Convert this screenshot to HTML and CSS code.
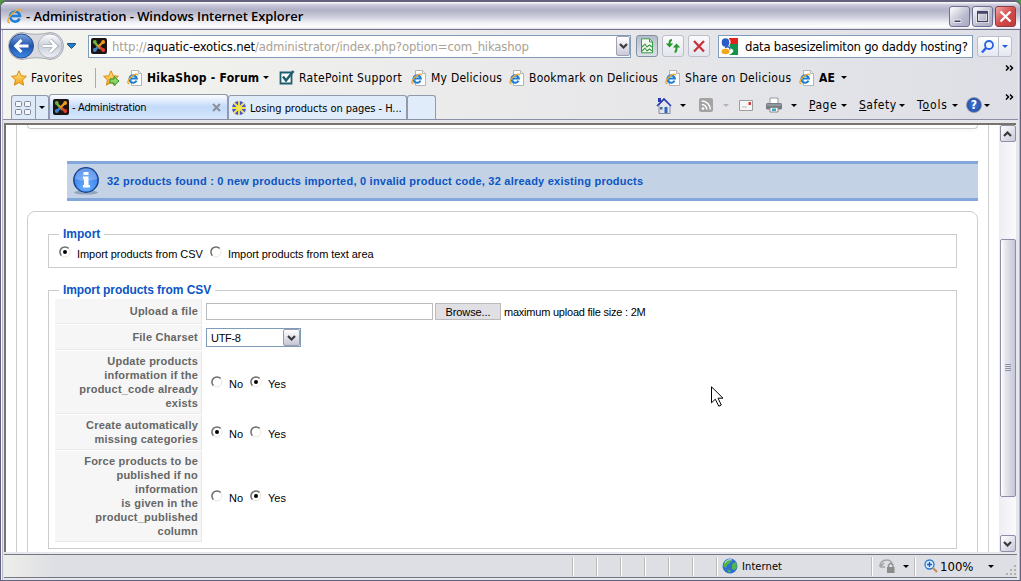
FILE: index.html
```html
<!DOCTYPE html>
<html lang="en">
<head>
    <meta charset="UTF-8">
    <title>- Administration</title>
    <link rel="stylesheet" href="styles.css">
</head>
<body>
    <!-- shared icons -->
    <svg class="defs" width="0" height="0">
        <linearGradient id="gold" x1="0" y1="0" x2="0" y2="1"><stop offset="0" stop-color="#ffe88a"/><stop offset="1" stop-color="#f5a012"/></linearGradient>
        <linearGradient id="blue" x1="0" y1="0" x2="0" y2="1"><stop offset="0" stop-color="#7da3dc"/><stop offset=".5" stop-color="#2055ac"/><stop offset="1" stop-color="#3c8ae6"/></linearGradient>
        <linearGradient id="grey" x1="0" y1="0" x2="0" y2="1"><stop offset="0" stop-color="#fff"/><stop offset=".5" stop-color="#c9cfda"/><stop offset="1" stop-color="#eef1f6"/></linearGradient>
        <radialGradient id="info" cx=".5" cy=".8" r=".8"><stop offset="0" stop-color="#6bb1ff"/><stop offset="1" stop-color="#2b72e4"/></radialGradient>
        <symbol id="ie" viewBox="0 0 16 16">
            <path d="M12.6 10.6A5 5 0 1 1 13 8H4" fill="none" stroke="#1d7fd6" stroke-width="2.6"/>
            <path d="M3 14.6C-.5 15 .6 10 5.500 5.300S15 .2 14.600 4" fill="none" stroke="#f0a92a" stroke-width="1.500"/>
        </symbol>
        <symbol id="page" viewBox="0 0 16 16">
            <path d="M4.500.5h7l3 3v12h-10z" fill="#fff" stroke="#b5b5b5"/>
            <path d="M11.500.5v3h3" fill="#eee" stroke="#b5b5b5"/>
            <path d="M9.500 10.600A3.700 3.700 0 1 1 9.800 8.500H3" fill="none" stroke="#1d7fd6" stroke-width="2.100"/>
            <path d="M2.500 13.500C-.5 14 .8 10 4 7s7-4 6.800-1.500" fill="none" stroke="#f0a92a" stroke-width="1.300"/>
        </symbol>
        <symbol id="joomla" viewBox="0 0 16 16">
            <rect width="16" height="16" rx="2" fill="#1c1414"/>
            <path d="M4 5l4 4 2 2" stroke="#7ab83a" stroke-width="2.400"/>
            <path d="M12 4L8 8l-2 2" stroke="#f2941f" stroke-width="2.400"/>
            <path d="M12 12L9 9" stroke="#e0402a" stroke-width="2.400"/>
            <path d="M4 12l3-3" stroke="#3b7fc9" stroke-width="2.400"/>
            <circle cx="3.800" cy="4" r="1.900" fill="#6db33a"/><circle cx="12.200" cy="4" r="1.900" fill="#f09a20"/>
            <circle cx="12.200" cy="12" r="1.900" fill="#e23b28"/><circle cx="3.800" cy="12" r="1.900" fill="#3f86d0"/>
        </symbol>
        <symbol id="star" viewBox="0 0 16 16"><path d="M8 .8l2.200 4.900 5.200.6-3.900 3.600 1.100 5.300L8 12.500l-4.600 2.700 1.100-5.300L.6 6.300l5.200-.6z" fill="url(#gold)" stroke="#d98a12"/></symbol>
        <symbol id="down" viewBox="0 0 6 3"><path d="M0 0h6L3 3z"/></symbol>
        <symbol id="chev" viewBox="0 0 9 6"><path d="M1 1l3.500 3.500L8 1" fill="none" stroke="#3a3a42" stroke-width="2.200"/></symbol>
        <symbol id="more" viewBox="0 0 9 6"><path d="M1 .5L3.500 3 1 5.500M5 .5L7.500 3 5 5.500" fill="none" stroke="#000" stroke-width="1.500"/></symbol>
        <symbol id="radio" viewBox="0 0 12 12">
            <circle cx="6" cy="6" r="5" fill="#fff" stroke="#e9e7dc"/>
            <path d="M2.400 9.600A5 5 0 0 1 9.600 2.400" fill="none" stroke="#6f6f6f" stroke-width="1.500"/>
        </symbol>
    </svg>

    <div class="window">
        <div class="title-bar">
            <svg class="title-icon" width="16" height="16"><use href="#ie"/></svg>
            <span class="title-text">- Administration - Windows Internet Explorer</span>
            <div class="win-btn"><svg width="19" height="19"><path d="M4 13h7v2.500H4z" fill="#44446a" stroke="#fff" stroke-width=".8"/></svg></div>
            <div class="win-btn"><svg width="19" height="19"><path d="M4.500 4.500h10v10h-10z" fill="none" stroke="#fff" stroke-width="3"/><path d="M4.500 4.500h10v10h-10zM4 6h11" fill="none" stroke="#44446a" stroke-width="1.300"/></svg></div>
            <div class="win-btn close"><svg width="19" height="19"><path d="M4.500 4.500l10 10M14.500 4.500l-10 10" stroke="#fff" stroke-width="2.400"/></svg></div>
        </div>

        <div class="address-row">
            <svg class="nav-buttons" width="58" height="30">
                <path d="M15 1.500Q29 5 43 1.500A13.500 13.500 0 0 1 43 28.500Q29 25 15 28.500A13.500 13.500 0 0 1 15 1.500z" fill="#d8dae0" stroke="#a9abb5"/>
                <circle cx="14.500" cy="15" r="12" fill="url(#blue)" stroke="#2a4d91"/>
                <path d="M21.500 15H9M14.500 9l-6 6 6 6" fill="none" stroke="#fff" stroke-width="2.800"/>
                <circle cx="43" cy="15" r="12" fill="url(#grey)" stroke="#b2b5c0"/>
                <path d="M36 15h12.500M43 9l6 6-6 6" fill="none" stroke="#9ca2b0" stroke-width="4"/>
                <path d="M36 15h12.500M43 9l6 6-6 6" fill="none" stroke="#fff" stroke-width="2.600"/>
            </svg>
            <svg class="history" width="9" height="6"><path d="M.5.5h8v1L4.500 5.500.5 1.500z" fill="#2a80c4" stroke="#1b4f86"/></svg>
            <div class="address-box">
                <svg width="16" height="16"><use href="#joomla"/></svg>
                <span class="url">http://<b>aquatic-exotics.net</b>/administrator/index.php?option=com_hikashop</span>
                <div class="drop-btn"><svg width="9" height="6"><use href="#chev"/></svg></div>
            </div>
            <div class="tool-btn pressed">
                <svg width="16" height="16"><path d="M2.500.8h8l3 3v11h-11z" fill="#f4fbf2" stroke="#3b9a45"/><path d="M10.500 1v3h3" fill="none" stroke="#3b9a45"/><path d="M3 9l3-3 2 3 2.500-2L13 9M3 13l3-3 2 3 2.500-2 2.500 2" fill="none" stroke="#3b9a45" stroke-width="1.100"/></svg>
            </div>
            <div class="tool-btn">
                <svg width="16" height="16"><path d="M7 2C4.500 2 4.500 4 4.500 7.500M9.500 14c2 0 2-2 2-5.500" fill="none" stroke="#259a2c" stroke-width="2"/><path d="M.8 5.500h7.400L4.500 9.500zM7.800 9.500h7.400L11.500 5.500z" fill="#259a2c"/></svg>
            </div>
            <div class="tool-btn">
                <svg width="16" height="16"><path d="M3 3l10 10.500M13 3L3 13.500" stroke="#c8323a" stroke-width="2.300"/></svg>
            </div>
            <div class="search-box">
                <svg width="17" height="17"><path d="M8 0h9v8H8z" fill="#e2231a"/><path d="M9 6h8v11H8z" fill="#129446"/><path d="M0 0h8v17H0z" fill="#fff"/><path d="M7 0q4 3 2 6t2 5-3 6H6V0z" fill="#fff"/><ellipse cx="4.500" cy="4.500" rx="3.800" ry="4.200" fill="#2a5cc8"/><path d="M4 9.500q5-2 5 2" fill="none" stroke="#2a5cc8" stroke-width="1.500"/><ellipse cx="4.500" cy="13.500" rx="4" ry="2.800" fill="#f1a81c"/></svg>
                <span class="search-text">data basesizelimiton go daddy hosting?</span>
            </div>
            <div class="search-btn">
                <svg width="20" height="21"><circle cx="11" cy="8" r="4" fill="#eef4ff" stroke="#2a63e0" stroke-width="1.800"/><path d="M8 11l-4 4.500" stroke="#2a63e0" stroke-width="2.500"/></svg>
                <div class="search-more"><svg class="blue-arrow" width="6" height="3"><use href="#down"/></svg></div>
            </div>
        </div>

        <div class="fav-row">
            <svg class="fav-star" width="16" height="16"><use href="#star"/></svg>
            <span class="fav favorites">Favorites</span>
            <div class="fav-line"></div>
            <svg class="fav-add" width="17" height="16"><use href="#star" width="16" height="16"/><path d="M7 9h4V6.500l5 4.500-5 4.500V13H7z" fill="#8fd765" stroke="#2f8f2a"/></svg>
            <svg class="fav-icon" width="16" height="16"><use href="#page"/></svg>
            <span class="fav forum">HikaShop - Forum</span>
            <svg class="arrow forum-arrow" width="6" height="3"><use href="#down"/></svg>
            <svg class="fav-icon" width="16" height="16"><path d="M1.500 2.500h11v11h-11z" fill="#fff" stroke="#1d5f70" stroke-width="1.800"/><path d="M4 6.500l3 4L14.500 1" fill="none" stroke="#1d5f70" stroke-width="2.500"/></svg>
            <span class="fav ratepoint">RatePoint Support</span>
            <svg class="fav-icon" width="16" height="16"><use href="#page"/></svg>
            <span class="fav my-del">My Delicious</span>
            <svg class="fav-icon" width="16" height="16"><use href="#page"/></svg>
            <span class="fav bookmark">Bookmark on Delicious</span>
            <svg class="fav-icon" width="16" height="16"><use href="#page"/></svg>
            <span class="fav share">Share on Delicious</span>
            <svg class="fav-icon" width="16" height="16"><use href="#page"/></svg>
            <span class="fav ae">AE</span>
            <svg class="arrow" width="6" height="3"><use href="#down"/></svg>
            <svg class="more" width="9" height="6"><use href="#more"/></svg>
        </div>

        <div class="tab-row">
            <div class="quick-tabs">
                <svg width="23" height="23"><g fill="#f3f6fb" stroke="#7d8799"><rect x="3.500" y="5.500" width="6" height="5" rx="1"/><rect x="12.500" y="5.500" width="6" height="5" rx="1"/><rect x="3.500" y="13.500" width="6" height="5" rx="1"/><rect x="12.500" y="13.500" width="6" height="5" rx="1"/></g></svg>
                <div class="quick-more"><svg width="6" height="3"><use href="#down"/></svg></div>
            </div>
            <div class="tab active">
                <svg width="16" height="16"><use href="#joomla"/></svg>
                <span class="tab-text admin">- Administration</span>
                <svg class="tab-close" width="9" height="9"><path d="M1 1l7 7M8 1L1 8" stroke="#8b8f98" stroke-width="2"/></svg>
            </div>
            <div class="tab">
                <svg width="16" height="16"><circle cx="8" cy="8" r="7" fill="#4b52d8"/><path d="M8 1v14M1 8h14M3 3l10 10M13 3L3 13" stroke="#f3e64b" stroke-width="1.800"/><circle cx="8" cy="8" r="2.500" fill="#f3e64b"/></svg>
                <span class="tab-text losing">Losing products on pages - H...</span>
            </div>
            <div class="tab new"></div>
            <div class="commands">
                <svg class="cmd-home" width="16" height="17"><path d="M3 8v8.500h11V8L8 3z" fill="#e3e5ec" stroke="#8a8fa0"/><path d="M1 9l7-7 7 7" fill="none" stroke="#2b3bb5" stroke-width="1.600"/><path d="M2 1h3v4H2z" fill="#2b3bb5"/><path d="M8.500 10h3v6h-3z" fill="#2d68c0"/><path d="M4 10h2.500v2.500H4z" fill="#53658a"/></svg>
                <svg class="cmd-a1" width="6" height="3"><use href="#down"/></svg>
                <svg class="cmd-rss" width="14" height="14"><rect width="14" height="14" rx="2" fill="#a3a3a3"/><circle cx="4" cy="10.500" r="1.300" fill="#fff"/><path d="M2.800 6.500a5 5 0 0 1 5 5M2.800 3a8.500 8.500 0 0 1 8.500 8.500" fill="none" stroke="#fff" stroke-width="1.500"/></svg>
                <svg class="cmd-a2" width="6" height="3"><use href="#down"/></svg>
                <svg class="cmd-mail" width="14" height="11"><path d="M.5.5h13v10H.5z" fill="#f5f5f5" stroke="#9d9d9d"/><path d="M9.500 2h2.500v3H9.500z" fill="#d8383a"/><path d="M3 7h5" stroke="#bbb"/></svg>
                <svg class="cmd-print" width="16" height="16"><path d="M4 1h8v6H4z" fill="#fff" stroke="#999"/><rect y="6" width="16" height="6.500" rx="1.500" fill="#777b83"/><path d="M1 8h14" stroke="#aeb2b9"/><path d="M4 10.500h8V15H4z" fill="#fff" stroke="#888"/><path d="M6 11.500h4V14H6z" fill="#37a6c8"/></svg>
                <svg class="cmd-a3" width="6" height="3"><use href="#down"/></svg>
                <span class="cmd page-cmd"><u>P</u>age</span><svg class="cmd-a4" width="6" height="3"><use href="#down"/></svg>
                <span class="cmd safety"><u>S</u>afety</span><svg class="cmd-a4" width="6" height="3"><use href="#down"/></svg>
                <span class="cmd tools">T<u>o</u>ols</span><svg class="cmd-a4" width="6" height="3"><use href="#down"/></svg>
                <div class="help">?</div>
                <svg class="cmd-a5" width="6" height="3"><use href="#down"/></svg>
            </div>
            <svg class="more" width="9" height="6"><use href="#more"/></svg>
        </div>

        <div class="viewport">
            <div class="page">
                <div class="top-panel"></div>
                <div class="message">
                    <svg width="28" height="30"><ellipse cx="14" cy="26.500" rx="12" ry="2" fill="#93a4bd"/><circle cx="14" cy="14" r="12.200" fill="url(#info)" stroke="#15408c" stroke-width="1.400"/><path d="M3 13a11 11 0 0 1 22 0Q14 17 3 13z" fill="#fff" opacity=".25"/><path d="M11.500 6h5v3h-5zM11 10.500h5.500V19h1.500v2.500h-7V19h1v-6h-1z" fill="#fff"/></svg>
                    <span>32 products found : 0 new products imported, 0 invalid product code, 32 already existing products</span>
                </div>
                <div class="panel">
                    <fieldset class="import-box">
                        <legend>Import</legend>
                        <div class="source">
                            <svg class="radio" width="12" height="12"><use href="#radio"/><circle cx="6" cy="6" r="2"/></svg>
                            <span class="from-csv">Import products from CSV</span>
                            <svg class="radio" width="12" height="12"><use href="#radio"/></svg>
                            <span class="from-text">Import products from text area</span>
                        </div>
                    </fieldset>
                    <fieldset class="csv-box">
                        <legend class="csv-legend">Import products from CSV</legend>
                        <div class="row r-file">
                            <div class="key">Upload a file</div>
                            <div class="value">
                                <div class="file-input"></div>
                                <div class="browse">Browse...</div>
                                <span class="max-size">maximum upload file size : 2M</span>
                            </div>
                        </div>
                        <div class="row r-charset">
                            <div class="key">File Charset</div>
                            <div class="value">
                                <div class="select"><span>UTF-8</span><div class="select-btn"><svg width="9" height="6"><use href="#chev"/></svg></div></div>
                            </div>
                        </div>
                        <div class="row r-update">
                            <div class="key">Update products<br>information if the<br>product_code already<br>exists</div>
                            <div class="value choice">
                                <svg class="radio" width="12" height="12"><use href="#radio"/></svg><span class="no">No</span>
                                <svg class="radio" width="12" height="12"><use href="#radio"/><circle cx="6" cy="6" r="2"/></svg><span>Yes</span>
                            </div>
                        </div>
                        <div class="row r-create">
                            <div class="key">Create automatically<br>missing categories</div>
                            <div class="value choice">
                                <svg class="radio" width="12" height="12"><use href="#radio"/><circle cx="6" cy="6" r="2"/></svg><span class="no">No</span>
                                <svg class="radio" width="12" height="12"><use href="#radio"/></svg><span>Yes</span>
                            </div>
                        </div>
                        <div class="row r-force">
                            <div class="key">Force products to be<br>published if no<br>information<br>is given in the<br>product_published<br>column</div>
                            <div class="value choice">
                                <svg class="radio" width="12" height="12"><use href="#radio"/></svg><span class="no">No</span>
                                <svg class="radio" width="12" height="12"><use href="#radio"/><circle cx="6" cy="6" r="2"/></svg><span>Yes</span>
                            </div>
                        </div>
                    </fieldset>
                </div>
            </div>
            <div class="scrollbar">
                <div class="scroll-btn"><svg class="flip" width="9" height="6"><use href="#chev"/></svg></div>
                <div class="thumb"><i></i><i></i><i></i><i></i></div>
                <div class="scroll-btn"><svg width="9" height="6"><use href="#chev"/></svg></div>
            </div>
        </div>

        <div class="status-bar">
            <div class="cell first"></div>
            <div class="cell"></div>
            <div class="cell"></div>
            <div class="cell"></div>
            <div class="cell"></div>
            <div class="cell"></div>
            <div class="cell"></div>
            <div class="cell zone">
                <svg width="16" height="16"><circle cx="8" cy="8" r="7.500" fill="#2f6fd0"/><path d="M3 3q4-3 6-1l-1 3-3 2-1 3-3-2zM10 6l4-2q2 5-1 8l-3-1zM5 11l4 2-2 2z" fill="#4fb848"/><path d="M3 5a6 6 0 0 1 7-3" stroke="#cfe3ff" fill="none"/></svg>
                <span>Internet</span>
            </div>
            <div class="cell lock">
                <svg width="17" height="16"><path d="M1 9q0-7 7-7 4 0 5 4M1 9l4-4M1 9h5" fill="none" stroke="#a5a5a5" stroke-width="1.600"/><rect x="8" y="9" width="7.500" height="6" fill="#8c8c8c"/><path d="M9.500 9V7q2-3 4.500 0v2" fill="none" stroke="#8c8c8c" stroke-width="1.300"/></svg>
                <svg width="6" height="3"><use href="#down"/></svg>
            </div>
            <div class="cell zoom">
                <svg width="14" height="14"><circle cx="5.500" cy="5.500" r="4.500" fill="#d9ecff" stroke="#2b78c9" stroke-width="1.300"/><path d="M3 5.500h5M5.500 3v5" stroke="#1959b8" stroke-width="1.400"/><path d="M9 9l4 4" stroke="#c78d56" stroke-width="2.200"/></svg>
                <span>100%</span>
                <svg width="6" height="3"><use href="#down"/></svg>
            </div>
            <svg class="grip" width="12" height="12"><path d="M9 1h2v2H9zM5 5h2v2H5zM9 5h2v2H9zM1 9h2v2H1zM5 9h2v2H5zM9 9h2v2H9z" fill="#b3b3ae"/></svg>
        </div>
    </div>

    <svg class="cursor" width="13" height="22"><path d="M.5.8v16l3.800-3.600 3.500 7 2.500-1.200-3.300-6.800h5z" fill="#fff" stroke="#000"/></svg>
</body>
</html>
```
FILE: styles.css
```css
body {
    margin: 0;
    background-color: #4c9a3a;
    font-family: "DejaVu Sans Condensed", "DejaVu Sans", sans-serif;
    font-size: 12px;
    color: #000;
    overflow: hidden;
}
svg {
    display: block;
    flex: none;
}
.defs {
    position: absolute;
}
.window {
    width: 1021px;
    height: 581px;
    box-sizing: border-box;
    border: 1px solid #62627f;
    border-top-width: 2px;
    border-radius: 7px 7px 0 0;
    background-color: #e6e7ed;
    box-shadow: inset 1px 0 #f5f5fa, inset 2px 0 #b9b9cf, inset -1px 0 #b9b9cf;
    display: flex;
    flex-direction: column;
    overflow: hidden;
    white-space: nowrap;
}
/* title bar */
.title-bar {
    height: 26px;
    border-bottom: 1px solid #73738d;
    background: linear-gradient(#fff 0, #c7c7d9 3px, #b1b1c6 8px, #c8c8d8 14px, #f2f2f7 21px, #fff 25px, #dadae6 27px);
    display: flex;
    align-items: center;
    padding: 1px 4px 0 6px;
}
.title-text {
    font-family: "Open Sans", "Noto Sans", sans-serif;
    font-size: 13px;
    font-weight: 600;
    letter-spacing: -0.08px;
    margin-left: 3px;
    flex: 1;
}
.win-btn {
    width: 19px;
    height: 19px;
    margin-left: 2px;
    border: 1px solid #6f7092;
    border-radius: 3px;
    background: linear-gradient(135deg, #fff, #bcbcd0 60%, #a9a9c2);
}
.win-btn.close {
    background: linear-gradient(135deg, #f0a9a6, #d44b49 50%, #c03c3c);
    border-color: #8b3c47;
}
/* address bar */
.address-row {
    height: 32px;
    margin: 0 2px;
    padding-left: 4px;
    background: linear-gradient(90deg, #f4f4ee, #ececec 40%, #dedfe6);
    display: flex;
    align-items: center;
}
.history {
    margin-left: 2px;
}
.address-box {
    width: 543px;
    height: 23px;
    box-sizing: border-box;
    margin-left: 12px;
    border: 1px solid #7f9db9;
    background-color: #fff;
    display: flex;
    align-items: center;
    padding-left: 2px;
}
.url {
    flex: 1;
    margin-left: 5px;
    color: #a9a296;
    font-size: 13px;
    letter-spacing: -0.17px;
}
.url b {
    font-weight: normal;
    color: #000;
}
.drop-btn {
    width: 14px;
    height: 20px;
    box-sizing: border-box;
    border: 1px solid #a0a0b5;
    border-radius: 2px;
    background: linear-gradient(#fff, #c9c9d8);
    display: flex;
    align-items: center;
    justify-content: center;
}
.tool-btn {
    width: 22px;
    height: 22px;
    box-sizing: border-box;
    margin-left: 4px;
    border: 1px solid #bcbecb;
    border-radius: 3px;
    background: linear-gradient(#fbfbfd, #e3e6ee);
    display: flex;
    align-items: center;
    justify-content: center;
}
.tool-btn.pressed {
    margin-left: 5px;
    border-color: #8590a2;
    background: linear-gradient(#b3bdcb, #dbe1e9);
}
.search-box {
    width: 255px;
    height: 23px;
    box-sizing: border-box;
    margin-left: 8px;
    border: 1px solid #7f9db9;
    background-color: #fff;
    display: flex;
    align-items: center;
    padding-left: 2px;
}
.search-text {
    margin-left: 7px;
    font-size: 13px;
    letter-spacing: -0.26px;
}
.search-btn {
    width: 35px;
    height: 21px;
    box-sizing: border-box;
    margin-left: 4px;
    border: 1px solid #bcbecb;
    border-radius: 3px;
    background: linear-gradient(#fff, #e4e7f0);
    display: flex;
    overflow: hidden;
}
.search-more {
    flex: 1;
    border-left: 1px solid #bcbecb;
    display: flex;
    align-items: center;
    justify-content: center;
}
.blue-arrow {
    fill: #1f5fe0;
}
/* favorites bar */
.fav-row {
    height: 31px;
    margin: 0 2px;
    background: linear-gradient(90deg, #f4f4ee, #ececec 40%, #dedfe6);
    display: flex;
    align-items: center;
    padding-left: 8px;
}
.fav {
    font-size: 12px;
    line-height: 16px;
    letter-spacing: 0.25px;
    margin-left: 4px;
}
.favorites {
    width: 64px;
    letter-spacing: 0.35px;
}
.fav-line {
    width: 1px;
    height: 20px;
    background-color: #a9a9b0;
    margin-right: 7px;
}
.fav-add {
    margin-right: 7px;
}
.forum {
    width: 116px;
    font-weight: bold;
}
.forum-arrow {
    margin-right: 10px;
}
.ratepoint {
    width: 112px;
    letter-spacing: 0.32px;
}
.my-del {
    width: 78px;
}
.bookmark {
    width: 136px;
}
.share {
    width: 114px;
    letter-spacing: 0.33px;
}
.ae {
    width: 22px;
    font-weight: bold;
}
.more {
    margin: 0 4px 19px auto;
}
/* tabs and command bar */
.tab-row {
    height: 26px;
    margin: 0 2px;
    border-bottom: 1px solid #8a8fa5;
    background: linear-gradient(90deg, #f4f4ee, #ececec 40%, #dedfe6);
    display: flex;
    align-items: flex-end;
    padding-left: 8px;
}
.quick-tabs {
    width: 38px;
    height: 24px;
    box-sizing: border-box;
    border: 1px solid #9299ad;
    border-bottom: none;
    border-radius: 3px 3px 0 0;
    background-color: #dfeaf8;
    display: flex;
}
.quick-more {
    flex: 1;
    border-left: 1px solid #9299ad;
    display: flex;
    align-items: center;
    justify-content: center;
}
.tab {
    width: 179px;
    height: 24px;
    box-sizing: border-box;
    border: 1px solid #9299ad;
    border-bottom: none;
    border-radius: 3px 3px 0 0;
    background-color: #e0ecfa;
    display: flex;
    align-items: center;
    padding-left: 2px;
}
.tab.active {
    height: 25px;
    padding-left: 3px;
    background: linear-gradient(#fbfdff, #c3dafa 50%, #d6e6fb);
}
.tab.new {
    width: 29px;
}
.tab-text {
    font-size: 11px;
    margin-left: 3px;
    padding-top: 1px;
}
.admin {
    letter-spacing: -0.3px;
}
.losing {
    letter-spacing: -0.05px;
}
.tab-close {
    margin: 0 6px 0 auto;
}
.commands {
    display: flex;
    align-items: center;
    height: 28px;
    margin-left: 220px;
}
.cmd-a1 {
    margin-left: 8px;
}
.cmd-rss {
    margin-left: 13px;
}
.cmd-a2 {
    margin-left: 10px;
    fill: #b5b5b5;
}
.cmd-mail {
    margin-left: 10px;
}
.cmd-print {
    margin-left: 13px;
}
.cmd-a3 {
    margin-left: 9px;
}
.cmd {
    font-size: 12px;
    letter-spacing: 0.5px;
    margin-left: 12px;
}
.page-cmd {
    width: 32px;
}
.safety {
    width: 40px;
}
.tools {
    width: 35px;
    letter-spacing: 0.9px;
}
.help {
    width: 14px;
    height: 14px;
    margin-left: 8px;
    border: 1px solid #8c93a8;
    border-radius: 50%;
    background: radial-gradient(#3f7de0, #1c3f96);
    color: #fff;
    font-weight: bold;
    line-height: 14px;
    text-align: center;
}
.cmd-a5 {
    margin-left: 2px;
}
.tab-row .more {
    margin-bottom: 19px;
}
/* page */
.viewport {
    height: 427px;
    margin: 3px 4px 0 3px;
    border: 1px solid #77756b;
    border-width: 2px 0 0 2px;
    background-color: #fff;
    display: flex;
    overflow: hidden;
}
.page {
    width: 971px;
    margin-left: 10px;
    border: 1px solid #ccc;
    border-width: 0 1px;
    font-family: "Liberation Sans", Arial, sans-serif;
    font-size: 11px;
}
.top-panel {
    width: 949px;
    height: 3px;
    margin-left: 10px;
    border: 1px solid #ccc;
    border-top: none;
    border-radius: 0 0 7px 7px;
    box-shadow: 0 3px #fafafa;
}
.message {
    width: 911px;
    height: 40px;
    box-sizing: border-box;
    margin: 32px 0 10px 50px;
    border: solid #84a7db;
    border-width: 3px 0;
    background-color: #c3d2e5;
    color: #0b55c4;
    font-weight: bold;
    letter-spacing: 0.23px;
    display: flex;
    align-items: center;
    padding-left: 5px;
}
.message span {
    margin-left: 7px;
}
.panel {
    width: 949px;
    height: 400px;
    margin-left: 10px;
    border: 1px solid #ccc;
    border-radius: 8px;
}
fieldset {
    width: 909px;
    box-sizing: border-box;
    margin: 0 0 0 20px;
    padding: 0;
    border: 1px solid #ccc;
}
legend {
    margin-left: 10px;
    padding: 0 4px;
    color: #0b55c4;
    font-size: 12px;
    font-weight: bold;
    line-height: 14px;
}
.import-box {
    height: 41px;
    margin-top: 15px;
}
.source {
    display: flex;
    padding: 6px 0 0 10px;
    letter-spacing: -0.06px;
}
.source span {
    line-height: 14px;
}
.radio {
    margin-top: -1px;
}
.from-csv {
    width: 133px;
    margin-left: 6px;
}
.from-text {
    margin-left: 6px;
}
.csv-box {
    height: 266px;
    margin-top: 15px;
    padding-left: 6px;
}
.csv-legend {
    margin-left: 4px;
    letter-spacing: -0.08px;
}
.row {
    display: flex;
    margin-bottom: 2px;
}
.key {
    width: 147px;
    box-sizing: border-box;
    padding: 3px 3px 0 0;
    border: 1px solid #e9e9e9;
    border-width: 0 1px 1px 0;
    background-color: #f6f6f6;
    color: #666;
    font-weight: bold;
    letter-spacing: 0.22px;
    line-height: 14px;
    text-align: right;
}
.value {
    display: flex;
    align-items: center;
    padding-left: 4px;
}
.r-file {
    height: 25px;
    margin-top: 2px;
    margin-bottom: 1px;
}
.r-charset {
    height: 25px;
    margin-bottom: 1px;
}
.r-file .key,
.r-charset .key {
    padding-top: 5px;
}
.r-update {
    height: 63px;
    margin-bottom: 1px;
}
.r-create {
    height: 35px;
    margin-bottom: 1px;
}
.r-force {
    height: 91px;
}
.file-input {
    width: 227px;
    height: 17px;
    box-sizing: border-box;
    border: 1px solid #bbb;
}
.browse {
    width: 66px;
    height: 17px;
    box-sizing: border-box;
    margin: 0 3px 0 2px;
    border: 1px solid #bbb;
    background-color: #e0dfe3;
    text-align: center;
    line-height: 16px;
    letter-spacing: -0.1px;
}
.max-size {
    letter-spacing: -0.22px;
}
.select {
    width: 95px;
    height: 19px;
    box-sizing: border-box;
    border: 1px solid #7f9db9;
    letter-spacing: -0.3px;
    display: flex;
    align-items: center;
    justify-content: space-between;
    padding-left: 4px;
}
.select-btn {
    width: 17px;
    height: 17px;
    box-sizing: border-box;
    border: 1px solid #9a9ab0;
    border-radius: 2px;
    background: linear-gradient(#fff, #c5c5d5);
    display: flex;
    align-items: center;
    justify-content: center;
}
.choice {
    padding-left: 9px;
}
.choice span {
    margin: 2px 0 0 6px;
}
.choice .no {
    width: 21px;
}
/* scrollbar */
.scrollbar {
    width: 17px;
    margin-left: 10px;
    background: linear-gradient(90deg, #ececf2, #fbfbfe);
    display: flex;
    flex-direction: column;
    justify-content: space-between;
    align-items: center;
}
.scroll-btn {
    width: 16px;
    height: 17px;
    box-sizing: border-box;
    border: 1px solid #8e8ea6;
    border-radius: 2px;
    background: linear-gradient(135deg, #fff, #c8c8d8);
    display: flex;
    align-items: center;
    justify-content: center;
}
.flip {
    transform: rotate(180deg);
}
.thumb {
    width: 16px;
    height: 258px;
    box-sizing: border-box;
    margin-top: 58px;
    border: 1px solid #8e8ea6;
    border-radius: 2px;
    background: linear-gradient(90deg, #fff, #e8e8ef 30%, #c6c6d8);
    display: flex;
    flex-direction: column;
    align-items: center;
    justify-content: center;
}
.thumb i {
    width: 6px;
    height: 1px;
    margin-bottom: 1px;
    background-color: #8a92a8;
}
/* status bar */
.status-bar {
    height: 22px;
    margin: 2px 3px 0;
    border: 1px solid #777784;
    border-width: 1px 0;
    background: linear-gradient(90deg, #eeeeea, #dedfe4 50px, #dedfe4);
    display: flex;
    align-items: center;
}
.cell {
    width: 23px;
    height: 19px;
    border-right: 1px solid #bdbdb8;
    box-shadow: 1px 0 #fff;
    display: flex;
    align-items: center;
}
.cell.first {
    width: 568px;
}
.zone {
    width: 154px;
}
.zone svg {
    margin: 0 4px 0 5px;
}
.zone span {
    font-size: 11px;
    letter-spacing: 0.1px;
}
.lock {
    width: 42px;
}
.lock svg {
    margin-left: 7px;
}
.zoom {
    flex: 1;
    border: none;
    box-shadow: none;
}
.zoom span {
    width: 48px;
    margin-left: 2px;
    font-size: 13px;
}
.zoom svg:first-child {
    margin-left: 9px;
}
.grip {
    margin-top: 8px;
}
.cursor {
    position: absolute;
    left: 711px;
    top: 386px;
}
```
